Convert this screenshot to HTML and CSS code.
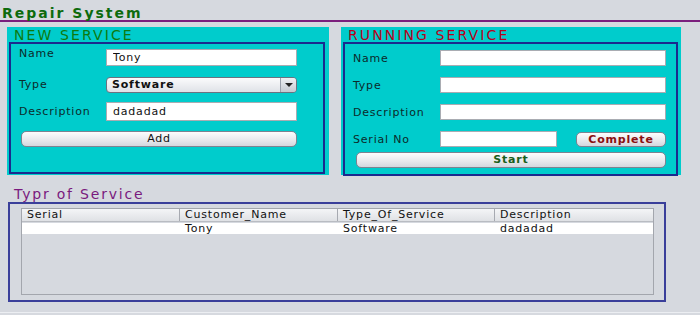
FILE: index.html
```html
<!DOCTYPE html>
<html lang="en">
<head>
	<meta charset="UTF-8">
	<title>Repair System</title>
	<link rel="stylesheet" href="styles.css">
</head>
<body>
	<div class="title-bar">Repair System</div>

	<div class="panels">
		<div class="panel panel-new">
			<div class="panel-title green">NEW SERVICE</div>
			<div class="panel-box form">
				<label class="lbl lbl-top">Name</label>
				<input type="text" class="ipt" value="Tony">
				<label class="lbl">Type</label>
				<div class="combo">
					<span class="combo-val">Software</span>
					<span class="combo-arrow"></span>
				</div>
				<label class="lbl">Description</label>
				<input type="text" class="ipt ipt-tall" value="dadadad">
				<div class="btn btn-wide btn-add">Add</div>
			</div>
		</div>

		<div class="panel panel-run">
			<div class="panel-title red">RUNNING SERVICE</div>
			<div class="panel-box form form-run">
				<label class="lbl">Name</label>
				<input type="text" class="ipt">
				<label class="lbl">Type</label>
				<input type="text" class="ipt">
				<label class="lbl">Description</label>
				<input type="text" class="ipt">
				<label class="lbl">Serial No</label>
				<div class="serial-row">
					<input type="text" class="ipt ipt-serial">
					<div class="btn btn-complete">Complete</div>
				</div>
				<div class="btn btn-wide btn-start">Start</div>
			</div>
		</div>
	</div>

	<div class="section">
		<div class="section-title">Typr of Service</div>
		<div class="section-box">
			<div class="table">
				<div class="thead">
					<div class="th">Serial</div>
					<div class="th">Customer_Name</div>
					<div class="th">Type_Of_Service</div>
					<div class="th">Description</div>
				</div>
				<div class="tr">
					<div class="td"></div>
					<div class="td">Tony</div>
					<div class="td">Software</div>
					<div class="td">dadadad</div>
				</div>
			</div>
		</div>
	</div>
	<div class="foot"></div>
</body>
</html>
```

FILE: styles.css
```css
*{
	box-sizing: border-box;
	margin: 0;
	padding: 0;
}
body{
	width: 700px;
	height: 315px;
	background: #d6d9df;
	font-family: "DejaVu Sans", Verdana, sans-serif;
	font-size: 11px;
	letter-spacing: 0.8px;
	color: #111;
	overflow: hidden;
}
.title-bar{
	height: 22px;
	padding: 6px 0 0 2px;
	font-size: 14px;
	font-weight: bold;
	line-height: 14px;
	letter-spacing: 2px;
	color: #0d6b0d;
	border-bottom: 2px solid #7b1f7d;
}
.panels{
	display: flex;
	padding: 5px 0 0 7px;
	gap: 12px;
}
.panel{
	height: 148px;
	background: #00cccc;
	padding: 0 3px 1px 2px;
	display: flex;
	flex-direction: column;
}
.panel-new{
	width: 322px;
	padding-right: 4px;
}
.panel-run{
	width: 340px;
}
.panel-title{
	height: 15px;
	padding-left: 5px;
	font-size: 14px;
	line-height: 17px;
	letter-spacing: 2.1px;
}
.green{
	color: #0e7a0e;
}
.red{
	color: #b8001a;
}
.panel-box{
	flex: 1;
	border: 2px solid #1b2a8e;
}
.form{
	display: grid;
	grid-template-columns: 87px 191px;
	grid-auto-rows: 17px;
	row-gap: 10px;
	align-items: center;
	padding: 5px 0 0 8px;
}
.form-run{
	grid-template-columns: 87px 226px;
	grid-auto-rows: 16px;
	row-gap: 11px;
	padding-top: 6px;
}
.lbl{
	color: #0c2a2a;
}
.lbl-top{
	align-self: start;
	margin-top: -2px;
}
.ipt{
	width: 100%;
	height: 17px;
	border: 1px solid #a9acb2;
	background: #fff;
	padding: 0 6px;
	font-family: inherit;
	font-size: 11px;
	letter-spacing: 0.8px;
	color: #111;
	outline: none;
}
.form-run .ipt{
	height: 16px;
}
.ipt-tall{
	height: 19px;
}
.combo{
	height: 16px;
	border: 1px solid #6c7280;
	border-radius: 4px;
	background: linear-gradient(#fbfbfc, #dfe2e7);
	display: flex;
	align-items: center;
}
.combo-val{
	flex: 1;
	padding-left: 5px;
	font-weight: bold;
}
.combo-arrow{
	width: 16px;
	height: 14px;
	border-left: 1px solid #9aa0ab;
	border-radius: 0 3px 3px 0;
	background: linear-gradient(#eef0f3, #c4c9d1);
	position: relative;
}
.combo-arrow:after{
	content: '';
	position: absolute;
	left: 4px;
	top: 5px;
	border-left: 4px solid transparent;
	border-right: 4px solid transparent;
	border-top: 4px solid #222;
}
.btn{
	height: 16px;
	border: 1px solid #7d8391;
	border-radius: 5px;
	background: linear-gradient(#fdfdfd, #e6e8ec 60%, #d3d7de);
	text-align: center;
	line-height: 14px;
	font-size: 11px;
}
.btn-wide{
	grid-column: 1 / -1;
	align-self: start;
}
.btn-add{
	margin: 1px 0 0 2px;
}
.serial-row{
	display: flex;
	justify-content: space-between;
	align-items: center;
}
.ipt-serial{
	width: 117px;
}
.btn-complete{
	width: 90px;
	height: 15px;
	font-weight: bold;
	color: #8a1010;
}
.btn-start{
	margin: -6px 0 0 3px;
	font-weight: bold;
	color: #1b5e1b;
}
.section{
	padding: 13px 0 0 8px;
}
.section-title{
	height: 14px;
	padding-left: 6px;
	font-size: 14px;
	line-height: 13px;
	letter-spacing: 1.8px;
	color: #7a1a7e;
}
.section-box{
	width: 658px;
	height: 100px;
	border: 2px solid #3a3f9a;
	padding: 4px 0 0 11px;
}
.table{
	width: 633px;
	height: 87px;
	border: 1px solid #a3a6ad;
}
.thead, .tr{
	display: grid;
	grid-template-columns: 158px 158px 157px 1fr;
}
.thead{
	height: 13px;
	background: linear-gradient(#f4f5f7, #dfe1e5);
	border-bottom: 1px solid #b9bcc2;
}
.th{
	padding-left: 5px;
	line-height: 12px;
	border-right: 1px solid #a7aab1;
}
.th:last-child{
	border-right: none;
}
.tr{
	margin-top: 1px;
	height: 11px;
	background: #fff;
}
.td{
	padding-left: 5px;
	line-height: 11px;
}
.foot{
	margin-top: 10px;
	border-top: 1px solid #eceef2;
}
```
